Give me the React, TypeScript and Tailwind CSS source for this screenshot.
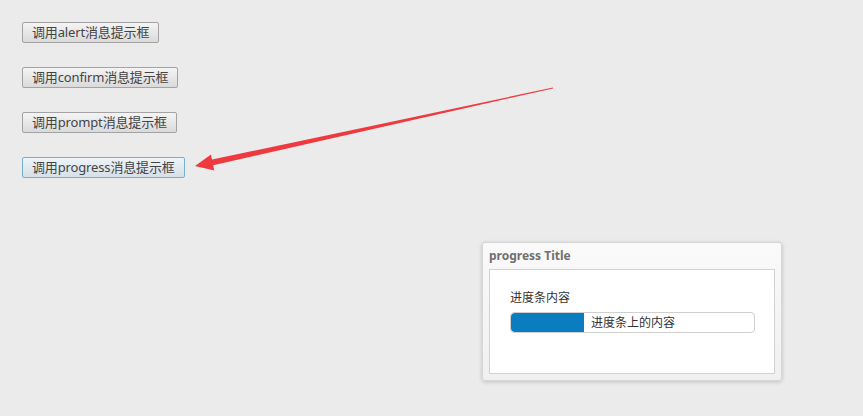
const font = { fontFamily: '"Noto Sans", "Noto Sans CJK SC", sans-serif' }

const buttons = ['alert', 'confirm', 'prompt', 'progress']

const App = () => {
    return (
        <div className="relative w-[863px] h-[416px] overflow-hidden bg-[#ebebeb]" style={font}>
            {/* Buttons */}
            <div className="flex flex-col items-start gap-[24px] pt-[22px] pl-[22px]">
                {buttons.map((name, index) => (
                    <button
                        key={name}
                        className={
                            index === 3
                                ? 'h-[21px] px-[9px] rounded-[2px] border border-[#79aed0] bg-gradient-to-b from-[#eef4f8] to-[#d6e0e8] text-[13px] leading-none text-[#444] tracking-[-0.15px]'
                                : 'h-[21px] px-[9px] rounded-[2px] border border-[#a3a3a3] bg-gradient-to-b from-[#f4f4f4] to-[#dadada] text-[13px] leading-none text-[#444] tracking-[-0.15px]'
                        }
                    >
                        调用{name}消息提示框
                    </button>
                ))}
            </div>

            {/* Arrow */}
            <svg className="absolute inset-0 pointer-events-none" width="863" height="416">
                <polygon
                    points="195,166 211,154.5 212,159.5 553,87.6 553,88.4 213.2,165.2 214.3,170.5"
                    fill="#ee3a3f"
                />
            </svg>

            {/* Progress dialog */}
            <div className="absolute left-[482px] top-[242px] w-[300px] h-[139px] flex flex-col rounded-[3px] border border-[#d6d6d6] bg-gradient-to-b from-[#fafafa] to-[#f0f0f0] shadow-[0_1px_4px_rgba(0,0,0,0.18)] px-[6px] pb-[6px]">
                <div className="h-[26px] flex items-center text-[12px] font-bold text-[#707070]">progress Title</div>
                <div className="flex-1 bg-white border border-[#d2d2d2] pt-[21px] px-[20px]">
                    <div className="text-[12px] leading-[14px] text-[#333]">进度条内容</div>
                    <div className="mt-[7px] relative h-[21px] w-[245px] rounded-[4px] border border-[#cfcfcf] bg-white overflow-hidden">
                        <div className="absolute left-0 top-0 bottom-0 w-[73px] bg-[#0a7dc1] rounded-l-[4px]" />
                        <div className="absolute inset-0 flex items-center pl-[80px] text-[12px] text-[#333]">进度条上的内容</div>
                    </div>
                </div>
            </div>
        </div>
    )
}

export default App
